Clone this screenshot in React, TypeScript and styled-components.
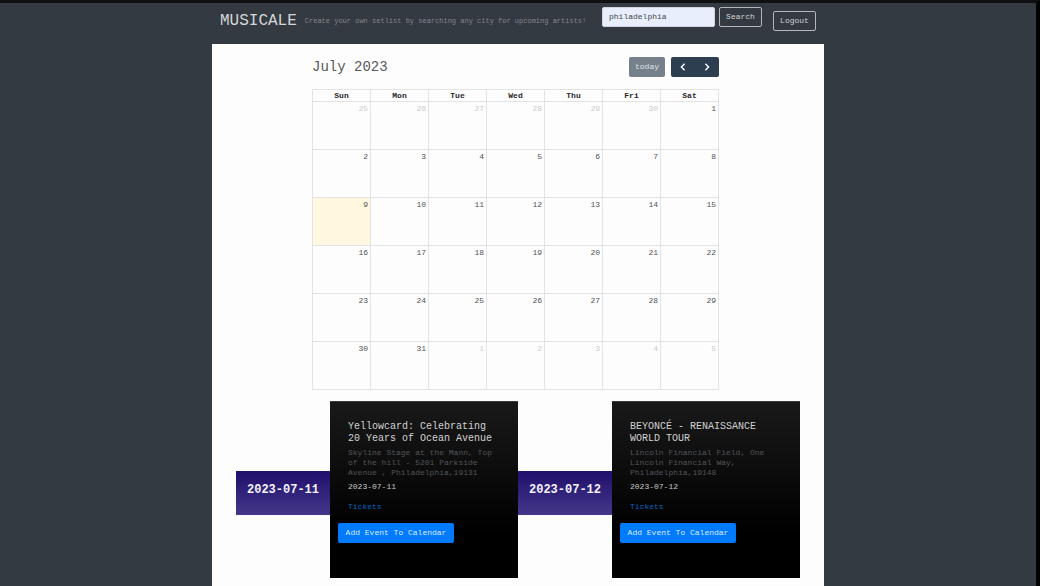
import React from "react";
import styled, { createGlobalStyle, css } from "styled-components";

const GlobalStyle = createGlobalStyle`
  *, *::before, *::after { box-sizing: border-box; }
  body {
    margin: 0;
    background: #343a42;
    color: #212529;
    font-family: "Courier New", "Liberation Mono", monospace;
    font-size: 8px;
    line-height: 10px;
  }
  button, input { font: inherit; }
`;

const Page = styled.div`
  display: flex;
  flex-direction: column;
  min-height: 100vh;
  border-top: 3px solid #0f100f;
  border-right: 4px solid #020303;
`;

const Navbar = styled.header`
  display: flex;
  align-items: flex-start;
  width: 100%;
  max-width: 612px;
  min-height: 41px;
  margin: 0 auto;
  padding: 4px 8px;
`;

const Brand = styled.a`
  margin-right: 8px;
  color: #d4d6d8;
  font-size: 16px;
  line-height: 28px;
  text-decoration: none;
`;

const Tagline = styled.span`
  color: #82868b;
  font-size: 7px;
  line-height: 28px;
  white-space: nowrap;
`;

const SearchForm = styled.form`
  display: flex;
  gap: 4px;
  margin: 0 11px 0 auto;
`;

const SearchInput = styled.input`
  width: 113px;
  height: 20px;
  padding: 0 6px 2px;
  border: 1px solid #ced4da;
  border-radius: 2px;
  background: #e8eefb;
  color: #42474e;
`;

const OutlineButton = styled.button<{ $lowered?: boolean }>`
  width: 43px;
  height: 20px;
  margin-top: ${(p) => (p.$lowered ? 4 : 0)}px;
  padding: 0;
  border: 1px solid #b4b7ba;
  border-radius: 2px;
  background: transparent;
  color: #d0d2d5;
`;

const Main = styled.main`
  flex: 1;
  width: 100%;
  max-width: 612px;
  margin: 0 auto;
  padding-bottom: 8px;
  background: #fdfdfd;
`;

const CalendarSection = styled.section`
  padding: 13px 105px 0 100px;
`;

const Toolbar = styled.div`
  display: flex;
  align-items: center;
  gap: 6px;
  margin-bottom: 12px;
`;

const MonthTitle = styled.h2`
  margin: 0 auto 0 0;
  color: #55585b;
  font-size: 14px;
  font-weight: 400;
  line-height: 20px;
`;

const TodayButton = styled.button`
  width: 36px;
  height: 20px;
  padding: 0;
  border: 0;
  border-radius: 2px;
  background: #76808b;
  color: #dfe3e6;
`;

const NavGroup = styled.div`
  display: flex;
  overflow: hidden;
  border-radius: 2px;
`;

const NavButton = styled.button`
  display: flex;
  align-items: center;
  justify-content: center;
  width: 24px;
  height: 20px;
  padding: 0;
  border: 0;
  background: #2c3e50;
  color: #fff;
`;

const MonthTable = styled.table`
  width: 100%;
  border-collapse: collapse;
  table-layout: fixed;
`;

const DayName = styled.th`
  height: 12px;
  padding: 0;
  border: 1px solid #e3e3e4;
  color: #25282b;
  font-weight: 700;
`;

const DayCell = styled.td<{ $muted: boolean; $today: boolean }>`
  height: 48px;
  padding: 2px 2px 0 0;
  border: 1px solid #e3e3e4;
  color: #515457;
  text-align: right;
  vertical-align: top;
  ${(p) => p.$muted && css`color: #cbcccd;`}
  ${(p) => p.$today && css`background: #fff7df;`}
`;

const EventRow = styled.section`
  display: grid;
  grid-template-columns: repeat(2, minmax(0, 1fr) minmax(0, 2fr));
  align-items: start;
  padding: 11px 24px 0;
`;

const DateBand = styled.h3`
  height: 44px;
  margin: 70px 0 0;
  padding: 12px 0 0;
  background: linear-gradient(#200f6b, #44378a);
  color: #f4f3fa;
  font-size: 12px;
  font-weight: 700;
  line-height: 14px;
  text-align: center;
`;

const EventCard = styled.article`
  min-height: 177px;
  padding: 19px 18px;
  border: 1px solid #3a3a3a;
  border-width: 1px 0 0;
  background: linear-gradient(#191919, #000 75%);
  color: #c8c8c8;
`;

const EventTitle = styled.h4`
  margin: 0 0 3px;
  color: #d2d2d2;
  font-size: 10px;
  font-weight: 400;
  line-height: 12px;
`;

const Venue = styled.p`
  margin: 0 0 4px;
  color: #50555a;
`;

const EventDate = styled.p`
  margin: 0 0 10px;
`;

const TicketLink = styled.a`
  display: block;
  margin-bottom: 11px;
  color: #0761bd;
  text-decoration: none;
`;

const AddButton = styled.button`
  width: 116px;
  height: 20px;
  margin-left: -10px;
  padding: 0;
  border: 0;
  border-radius: 2px;
  background: #007bff;
  color: #dcecff;
`;

const dayNames = ["Sun", "Mon", "Tue", "Wed", "Thu", "Fri", "Sat"];

// Six weeks starting on Sunday 25 June 2023.
const weeks = Array.from({ length: 6 }, (_, w) =>
  Array.from({ length: 7 }, (_, d) => {
    const date = new Date(2023, 5, 25 + w * 7 + d);
    const inMonth = date.getMonth() === 6;
    return {
      day: date.getDate(),
      muted: !inMonth,
      today: inMonth && date.getDate() === 9,
    };
  })
);

const events = [
  {
    date: "2023-07-11",
    title: "Yellowcard: Celebrating 20 Years of Ocean Avenue",
    venue:
      "Skyline Stage at the Mann, Top of the hill - 5201 Parkside Avenue , Philadelphia,19131",
  },
  {
    date: "2023-07-12",
    title: "BEYONCÉ - RENAISSANCE WORLD TOUR",
    venue: "Lincoln Financial Field, One Lincoln Financial Way, Philadelphia,19148",
  },
];

function Chevron({ points }: { points: string }) {
  return (
    <svg width="8" height="10" viewBox="0 0 8 10" fill="none" aria-hidden="true">
      <polyline points={points} stroke="currentColor" strokeWidth="1.4" />
    </svg>
  );
}

export default function App() {
  return (
    <>
      <GlobalStyle />
      <Page>
        <Navbar>
          <Brand href="#">MUSICALE</Brand>
          <Tagline>
            Create your own setlist by searching any city for upcoming artists!
          </Tagline>
          <SearchForm onSubmit={(e) => e.preventDefault()}>
            <SearchInput type="text" aria-label="City" defaultValue="philadelphia" />
            <OutlineButton type="submit">Search</OutlineButton>
          </SearchForm>
          <OutlineButton type="button" $lowered>
            Logout
          </OutlineButton>
        </Navbar>
        <Main>
          <CalendarSection>
            <Toolbar>
              <MonthTitle>July 2023</MonthTitle>
              <TodayButton type="button" disabled>
                today
              </TodayButton>
              <NavGroup>
                <NavButton type="button" aria-label="Previous month">
                  <Chevron points="5.6,1.8 2.4,5 5.6,8.2" />
                </NavButton>
                <NavButton type="button" aria-label="Next month">
                  <Chevron points="2.4,1.8 5.6,5 2.4,8.2" />
                </NavButton>
              </NavGroup>
            </Toolbar>
            <MonthTable>
              <thead>
                <tr>
                  {dayNames.map((name) => (
                    <DayName key={name} scope="col">
                      {name}
                    </DayName>
                  ))}
                </tr>
              </thead>
              <tbody>
                {weeks.map((week, w) => (
                  <tr key={w}>
                    {week.map((cell, d) => (
                      <DayCell key={d} $muted={cell.muted} $today={cell.today}>
                        {cell.day}
                      </DayCell>
                    ))}
                  </tr>
                ))}
              </tbody>
            </MonthTable>
          </CalendarSection>
          <EventRow>
            {events.map((event) => (
              <React.Fragment key={event.date}>
                <DateBand>{event.date}</DateBand>
                <EventCard>
                  <EventTitle>{event.title}</EventTitle>
                  <Venue>{event.venue}</Venue>
                  <EventDate>{event.date}</EventDate>
                  <TicketLink href="#">Tickets</TicketLink>
                  <AddButton type="button">Add Event To Calendar</AddButton>
                </EventCard>
              </React.Fragment>
            ))}
          </EventRow>
        </Main>
      </Page>
    </>
  );
}
